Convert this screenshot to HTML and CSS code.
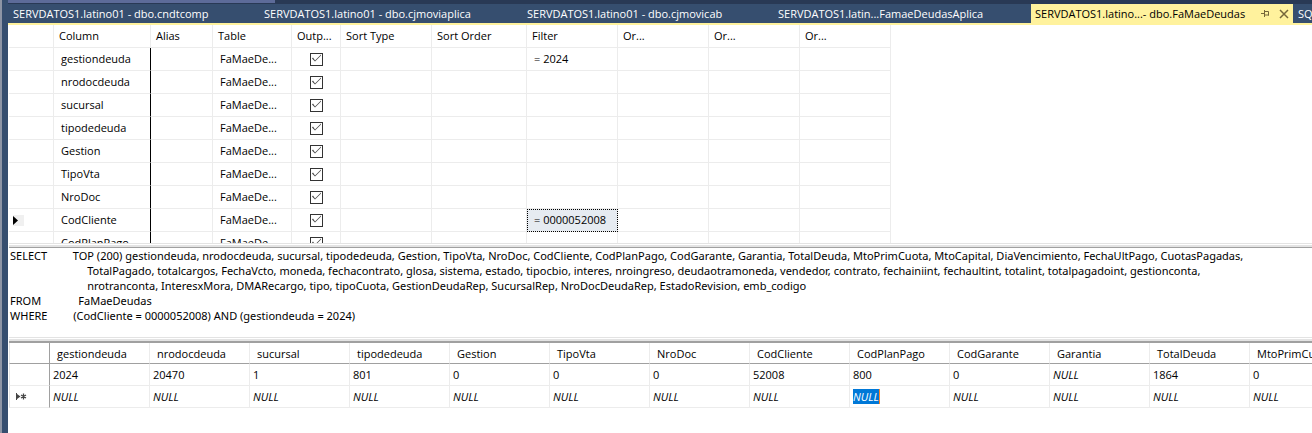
FILE: index.html
```html
<!DOCTYPE html>
<html lang="en">
<head>
    <meta charset="UTF-8">
    <meta name="viewport" content="width=device-width, initial-scale=1.0">
    <title>SERVDATOS1.latino01 - dbo.FaMaeDeudas</title>
    <link rel="stylesheet" href="styles.css">
</head>
<body>
    <div class="dock-edge"></div>
    <main class="window">
        <div class="toolbar-edge"></div>
        <nav class="tabs">
            <button class="tab" type="button">SERVDATOS1.latino01 - dbo.cndtcomp</button>
            <button class="tab tab-wide" type="button">SERVDATOS1.latino01 - dbo.cjmoviaplica</button>
            <button class="tab" type="button">SERVDATOS1.latino01 - dbo.cjmovicab</button>
            <button class="tab tab-last" type="button">SERVDATOS1.latin...FamaeDeudasAplica</button>
            <div class="tab tab-active">
                <button class="tab-title" type="button">SERVDATOS1.latino...- dbo.FaMaeDeudas</button>
                <button class="tab-icon" type="button" aria-label="Pin tab">
                    <svg width="9" height="9" viewBox="0 0 9 9"><path d="M0 4.500h3M3.500 1v7M3.500 2.500h4v4M3.500 6h4.500" fill="none" stroke="#75663a"/></svg>
                </button>
                <button class="tab-icon" type="button" aria-label="Close tab">
                    <svg width="10" height="10" viewBox="0 0 10 10"><path d="M1 1l8 8M9 1l-8 8" fill="none" stroke="#75663a" stroke-width="1.5"/></svg>
                </button>
            </div>
            <button class="tab tab-next" type="button">SQLQuery1.sql</button>
        </nav>

        <section class="criteria">
            <table class="criteria-grid">
                <colgroup>
                    <col class="c-row"><col class="c-column"><col class="c-alias"><col class="c-table"><col class="c-output">
                    <col class="c-sort"><col class="c-order"><col class="c-sort"><col class="c-sort"><col class="c-sort"><col class="c-sort">
                </colgroup>
                <thead>
                    <tr><th></th><th>Column</th><th>Alias</th><th>Table</th><th>Outp...</th><th>Sort Type</th><th>Sort Order</th><th>Filter</th><th>Or...</th><th>Or...</th><th>Or...</th></tr>
                </thead>
                <tbody>
                    <tr><td></td><td class="name">gestiondeuda</td><td></td><td>FaMaeDe...</td><td class="output"><input type="checkbox" aria-label="Output gestiondeuda" checked></td><td></td><td></td><td>= 2024</td><td></td><td></td><td></td></tr>
                    <tr><td></td><td class="name">nrodocdeuda</td><td></td><td>FaMaeDe...</td><td class="output"><input type="checkbox" aria-label="Output nrodocdeuda" checked></td><td></td><td></td><td></td><td></td><td></td><td></td></tr>
                    <tr><td></td><td class="name">sucursal</td><td></td><td>FaMaeDe...</td><td class="output"><input type="checkbox" aria-label="Output sucursal" checked></td><td></td><td></td><td></td><td></td><td></td><td></td></tr>
                    <tr><td></td><td class="name">tipodedeuda</td><td></td><td>FaMaeDe...</td><td class="output"><input type="checkbox" aria-label="Output tipodedeuda" checked></td><td></td><td></td><td></td><td></td><td></td><td></td></tr>
                    <tr><td></td><td class="name">Gestion</td><td></td><td>FaMaeDe...</td><td class="output"><input type="checkbox" aria-label="Output Gestion" checked></td><td></td><td></td><td></td><td></td><td></td><td></td></tr>
                    <tr><td></td><td class="name">TipoVta</td><td></td><td>FaMaeDe...</td><td class="output"><input type="checkbox" aria-label="Output TipoVta" checked></td><td></td><td></td><td></td><td></td><td></td><td></td></tr>
                    <tr><td></td><td class="name">NroDoc</td><td></td><td>FaMaeDe...</td><td class="output"><input type="checkbox" aria-label="Output NroDoc" checked></td><td></td><td></td><td></td><td></td><td></td><td></td></tr>
                    <tr>
                        <td class="marker"><svg width="12" height="11" viewBox="0 0 12 11"><path d="M1 0h11v11H1z" fill="#f0f0f0"/><path d="M1 1l5 4.500-5 4.500z" fill="#000"/></svg></td>
                        <td class="name">CodCliente</td><td></td><td>FaMaeDe...</td><td class="output"><input type="checkbox" aria-label="Output CodCliente" checked></td><td></td><td></td><td class="focused">= 0000052008</td><td></td><td></td><td></td>
                    </tr>
                    <tr><td></td><td class="name">CodPlanPago</td><td></td><td>FaMaeDe...</td><td class="output"><input type="checkbox" aria-label="Output CodPlanPago" checked></td><td></td><td></td><td></td><td></td><td></td><td></td></tr>
                </tbody>
            </table>
        </section>

        <div class="splitter"></div>

        <textarea class="sql" aria-label="SQL" wrap="off" spellcheck="false">
SELECT         TOP (200) gestiondeuda, nrodocdeuda, sucursal, tipodedeuda, Gestion, TipoVta, NroDoc, CodCliente, CodPlanPago, CodGarante, Garantia, TotalDeuda, MtoPrimCuota, MtoCapital, DiaVencimiento, FechaUltPago, CuotasPagadas, 
                           TotalPagado, totalcargos, FechaVcto, moneda, fechacontrato, glosa, sistema, estado, tipocbio, interes, nroingreso, deudaotramoneda, vendedor, contrato, fechainiint, fechaultint, totalint, totalpagadoint, gestionconta, 
                           nrotranconta, InteresxMora, DMARecargo, tipo, tipoCuota, GestionDeudaRep, SucursalRep, NroDocDeudaRep, EstadoRevision, emb_codigo
FROM             FaMaeDeudas
WHERE         (CodCliente = 0000052008) AND (gestiondeuda = 2024)</textarea>

        <div class="splitter splitter-results"></div>

        <section class="results">
            <table class="results-grid">
                <colgroup><col class="r-row"><col span="13" class="r-data"></colgroup>
                <thead>
                    <tr><th></th><th>gestiondeuda</th><th>nrodocdeuda</th><th>sucursal</th><th>tipodedeuda</th><th>Gestion</th><th>TipoVta</th><th>NroDoc</th><th>CodCliente</th><th>CodPlanPago</th><th>CodGarante</th><th>Garantia</th><th>TotalDeuda</th><th>MtoPrimCuota</th></tr>
                </thead>
                <tbody>
                    <tr><td></td><td>2024</td><td>20470</td><td>1</td><td>801</td><td>0</td><td>0</td><td>0</td><td>52008</td><td>800</td><td>0</td><td><i>NULL</i></td><td>1864</td><td>0</td></tr>
                    <tr>
                        <td class="marker"><svg width="11" height="7" viewBox="0 0 11 7"><path d="M0 0h1v7H0zM1 1l3.500 2.500L1 6z" fill="#444"/><path d="M7.500 0.500v6M5 2l5 3M10 2L5 5" fill="none" stroke="#444" stroke-width="1.300"/></svg></td>
                        <td><i>NULL</i></td><td><i>NULL</i></td><td><i>NULL</i></td><td><i>NULL</i></td><td><i>NULL</i></td><td><i>NULL</i></td><td><i>NULL</i></td><td><i>NULL</i></td><td><i class="selected">NULL</i></td><td><i>NULL</i></td><td><i>NULL</i></td><td><i>NULL</i></td><td><i>NULL</i></td>
                    </tr>
                </tbody>
            </table>
        </section>
    </main>
</body>
</html>
```
FILE: styles.css
```css
* {
    box-sizing: border-box;
}

body {
    margin: 0;
    display: flex;
    min-height: 100vh;
    background: #fff;
    color: #000;
    font-family: "Open Sans", "Noto Sans", sans-serif;
    font-size: 11px;
    line-height: 15px;
    overflow: hidden;
}

button, textarea {
    font: inherit;
}

.dock-edge {
    flex: none;
    width: 8px;
    background: #364e6f;
    border-left: 2px solid #8e95a5;
}

.window {
    flex: 1;
    min-width: 0;
    display: flex;
    flex-direction: column;
    padding-left: 1px;
}

.toolbar-edge {
    height: 4px;
    margin-left: -1px;
    background: #293955;
}

.toolbar-edge::before {
    content: "";
    display: block;
    width: 267px;
    height: 3px;
    background: #5d6b99;
}

/* document tabs */
.tabs {
    display: flex;
    height: 21px;
    margin-left: -1px;
    padding-left: 1px;
    background: #364e6f;
    border-bottom: 2px solid #fff29d;
    overflow: hidden;
}

.tab {
    flex: none;
    width: 251px;
    padding: 0 4px;
    border: none;
    background: none;
    color: #fff;
    text-align: left;
    white-space: nowrap;
}

.tab-wide {
    width: 263px;
}

.tab-last {
    width: 257px;
}

.tab-next {
    padding: 0 5px;
}

.tab-active {
    display: flex;
    align-items: center;
    width: 262px;
    background: #fff29d;
}

.tab-title {
    flex: 1;
    padding: 0;
    border: none;
    background: none;
    color: #000;
    text-align: left;
}

.tab-icon {
    display: flex;
    margin-left: 9px;
    padding: 0;
    border: none;
    background: none;
}

/* criteria pane */
.criteria {
    height: 218px;
    overflow: hidden;
}

table {
    table-layout: fixed;
    border-collapse: separate;
    border-spacing: 0;
}

th, td {
    padding: 0 7px;
    border-right: 1px solid #ececec;
    border-bottom: 1px solid #ececec;
    font-weight: normal;
    text-align: left;
    white-space: nowrap;
}

.criteria-grid {
    width: 882px;
}

.criteria-grid tr {
    height: 23px;
}

.criteria-grid th {
    padding: 0 5px 2px;
}

.criteria-grid td {
    padding-bottom: 2px;
}

.c-row { width: 45px; }
.c-column { width: 97px; }
.c-alias { width: 62px; }
.c-table { width: 79px; }
.c-output { width: 49px; }
.c-sort { width: 91px; }
.c-order { width: 95px; }

.criteria-grid .name {
    border-right-color: #000;
    border-bottom-color: #ececec;
}

.criteria-grid .output {
    padding: 0 0 0 18px;
}

td.marker {
    padding: 0 3px;
}

.marker svg, .output input {
    display: block;
}

input[type="checkbox"] {
    appearance: none;
    width: 13px;
    height: 13px;
    margin: 0;
    border: 1px solid #333;
    background: #fff;
}

input[type="checkbox"]:checked::before {
    content: "";
    display: block;
    width: 11px;
    height: 11px;
    background: #444;
    clip-path: polygon(1px 5px, 2px 4px, 4px 7px, 10px 1px, 10px 2px, 4px 8px);
}

.focused {
    background: #e6ebf1;
    outline: 1px dotted #000;
    outline-offset: -1px;
}

.splitter {
    height: 5px;
    background: #e3e3e3;
    border-top: 1px solid #e3e3e3;
    border-bottom: 1px solid #a0a0a0;
    box-shadow: inset 0 1px #fff;
}

.splitter-results {
    height: 6px;
    border-bottom-width: 2px;
}

/* SQL pane */
.sql {
    display: block;
    width: 100%;
    height: 89px;
    padding: 0 1px;
    border: none;
    outline: none;
    resize: none;
    overflow: hidden;
    background: #fff;
    color: #000;
    font-family: "Noto Sans", "Open Sans", sans-serif;
    white-space: pre;
}

/* results pane */
.results {
    overflow: hidden;
}

.results-grid {
    width: 1341px;
}

.r-row { width: 41px; }
.r-data { width: 100px; }

.results-grid tr {
    height: 22px;
}

.results-grid thead tr {
    height: 21px;
}

.results-grid th {
    padding: 0 7px;
    border-bottom-color: #a0a0a0;
}

.results-grid td {
    padding: 0 3px 1px;
}

.results-grid th:first-child, .results-grid td:first-child {
    border-left: 1px solid #e3e3e3;
    border-right-color: #a0a0a0;
}

.results-grid td.marker {
    padding: 0 6px;
}

.selected {
    display: inline-block;
    background: #0078d7;
    color: #fff;
    border-right: 1px solid #ff8728;
}
```
